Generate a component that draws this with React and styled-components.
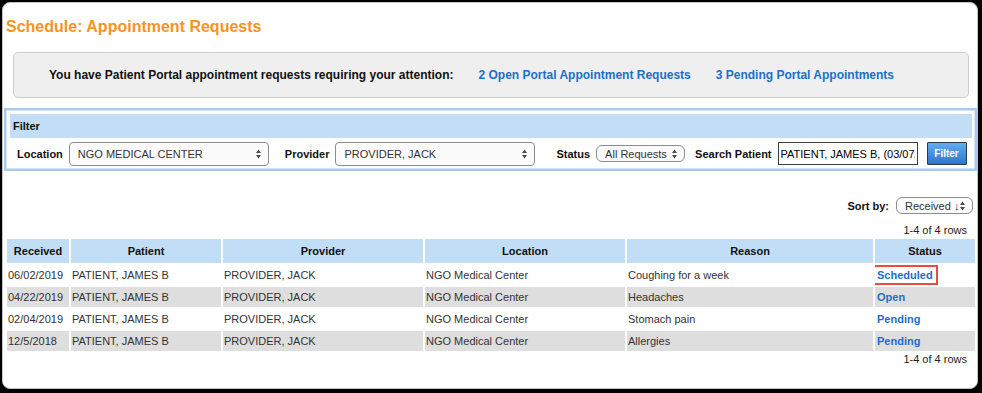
import React from 'react'
import styled, { createGlobalStyle } from 'styled-components'

const rows = [
  { received: '06/02/2019', patient: 'PATIENT, JAMES B', provider: 'PROVIDER, JACK', location: 'NGO Medical Center', reason: 'Coughing for a week', status: 'Scheduled', marked: true },
  { received: '04/22/2019', patient: 'PATIENT, JAMES B', provider: 'PROVIDER, JACK', location: 'NGO Medical Center', reason: 'Headaches', status: 'Open' },
  { received: '02/04/2019', patient: 'PATIENT, JAMES B', provider: 'PROVIDER, JACK', location: 'NGO Medical Center', reason: 'Stomach pain', status: 'Pending' },
  { received: '12/5/2018', patient: 'PATIENT, JAMES B', provider: 'PROVIDER, JACK', location: 'NGO Medical Center', reason: 'Allergies', status: 'Pending' }
]

const columns = [
  { label: 'Received', width: 62 },
  { label: 'Patient', width: 150 },
  { label: 'Provider', width: 200 },
  { label: 'Location', width: 200 },
  { label: 'Reason', width: 246 },
  { label: 'Status', width: 100 }
]

const Arrows = () =>
  <svg width="7" height="10" viewBox="0 0 7 10">
    <path d="M3.5 0.5 L6 4 H1 Z M3.5 9.5 L1 6 H6 Z" fill="#4a4a4a" />
  </svg>

const Dropdown = ({ width, small, value }) =>
  <SelectWrap>
    <Select width={width} small={small} defaultValue={value}>
      <option>{value}</option>
    </Select>
    <ArrowBox><Arrows /></ArrowBox>
  </SelectWrap>

export default () =>
  <>
    <GlobalStyle />
    <Page>
      <Title>Schedule: Appointment Requests</Title>
      <Notice>
        <span>You have Patient Portal appointment requests requiring your attention:</span>
        <Link href="#">2 Open Portal Appointment Requests</Link>
        <Link href="#">3 Pending Portal Appointments</Link>
      </Notice>

      <FilterBox>
        <FilterHeader>Filter</FilterHeader>
        <FilterRow>
          <Field>
            <Label>Location</Label>
            <Dropdown width={200} value="NGO MEDICAL CENTER" />
          </Field>
          <Field offset={16}>
            <Label>Provider</Label>
            <Dropdown width={200} value="PROVIDER, JACK" />
          </Field>
          <Field offset={21}>
            <Label>Status</Label>
            <Dropdown width={89} small value="All Requests" />
          </Field>
          <Field offset={10}>
            <Label>Search Patient</Label>
            <SearchInput defaultValue="PATIENT, JAMES B, (03/07/1975)" />
          </Field>
          <FilterButton>Filter</FilterButton>
        </FilterRow>
      </FilterBox>

      <SortRow>
        <Label>Sort by:</Label>
        <Dropdown width={77} small value="Received ↓" />
      </SortRow>
      <RowCount>1-4 of 4 rows</RowCount>

      <Table>
        <colgroup>
          {columns.map(c => <col key={c.label} style={{ width: c.width }} />)}
        </colgroup>
        <thead>
          <tr>
            {columns.map(c => <Th key={c.label}>{c.label}</Th>)}
          </tr>
        </thead>
        <tbody>
          {rows.map((r, i) =>
            <Tr key={i} striped={i % 2 === 1}>
              <Td>{r.received}</Td>
              <Td>{r.patient}</Td>
              <Td>{r.provider}</Td>
              <Td>{r.location}</Td>
              <Td>{r.reason}</Td>
              <Td>
                <StatusLink href="#" marked={r.marked}>{r.status}</StatusLink>
              </Td>
            </Tr>
          )}
        </tbody>
      </Table>
      <RowCount top={0}>1-4 of 4 rows</RowCount>
    </Page>
  </>

const GlobalStyle = createGlobalStyle`
  html, body {
    margin: 0;
    background: #000;
  }
  body {
    padding: 2px 4px 4px 2px;
    font-family: "Liberation Sans", Arial, Helvetica, sans-serif;
  }
`

const Page = styled.div`
  box-sizing: border-box;
  height: 387px;
  background: #fff;
  border: 1px solid #c4c4c4;
  border-radius: 8px;
  overflow: hidden;
`

const Title = styled.h1`
  margin: 15px 0 0 3px;
  font-size: 16px;
  line-height: 18px;
  font-weight: bold;
  color: #f7941d;
`

const Notice = styled.div`
  box-sizing: border-box;
  display: flex;
  align-items: center;
  gap: 25px;
  height: 46px;
  margin: 16px 8px 0 10px;
  padding-left: 35px;
  background: #efefef;
  border: 1px solid #cdcdcd;
  border-radius: 5px;
  font-size: 12px;
  font-weight: bold;
  color: #111;
`

const Link = styled.a`
  color: #1b6fca;
  text-decoration: none;
`

const FilterBox = styled.div`
  margin: 10px 0 0 1px;
  padding: 4px 3px 0 4px;
  border: 2px solid #a9c9ee;
  box-shadow: inset 0 0 0 1px #d4e5f8;
`

const FilterHeader = styled.div`
  height: 24px;
  line-height: 24px;
  padding-left: 3px;
  background: #c2ddf6;
  font-size: 11px;
  font-weight: bold;
  color: #111;
`

const FilterRow = styled.div`
  display: flex;
  align-items: center;
  height: 31px;
  padding-left: 7px;
`

const Field = styled.div`
  display: flex;
  align-items: center;
  gap: 6px;
  margin-left: ${props => props.offset || 0}px;
`

const Label = styled.span`
  font-size: 11px;
  font-weight: bold;
  color: #111;
`

const SelectWrap = styled.div`
  position: relative;
  display: inline-flex;
`

const Select = styled.select`
  appearance: none;
  box-sizing: border-box;
  width: ${props => props.width}px;
  height: ${props => props.small ? 17 : 24}px;
  margin: 0;
  padding: 0 ${props => props.small ? 12 : 16}px 0 8px;
  background: #fbfbfb;
  border: 1px solid #8c8c8c;
  border-radius: ${props => props.small ? 6 : 4}px;
  font-family: "Liberation Sans", "DejaVu Sans", Arial, sans-serif;
  font-size: 11px;
  color: #333;
`

const ArrowBox = styled.span`
  position: absolute;
  top: 50%;
  right: 7px;
  display: flex;
  transform: translateY(-50%);
  pointer-events: none;
`

const SearchInput = styled.input`
  box-sizing: border-box;
  width: 140px;
  height: 23px;
  margin: 0;
  padding: 0 2px;
  border: 1px solid #3c3c3c;
  border-radius: 0;
  font-family: "Liberation Sans", Arial, sans-serif;
  font-size: 11px;
  color: #000;
`

const FilterButton = styled.button`
  box-sizing: border-box;
  width: 40px;
  height: 23px;
  margin-left: 9px;
  padding: 0;
  border: 1px solid #2f3a48;
  border-radius: 1px;
  background: linear-gradient(#66acf0, #2c76d0);
  font-family: "Liberation Sans", Arial, sans-serif;
  font-size: 10px;
  font-weight: bold;
  color: #fff;
`

const SortRow = styled.div`
  display: flex;
  justify-content: flex-end;
  align-items: center;
  gap: 7px;
  height: 17px;
  margin: 26px 4px 0 0;
`

const RowCount = styled.div`
  margin: ${props => props.top ?? 10}px 10px 0 0;
  text-align: right;
  font-size: 11px;
  line-height: 13px;
  color: #222;
`

const Table = styled.table`
  table-layout: fixed;
  width: 972px;
  margin-left: 2px;
  border-spacing: 2px;
  font-size: 11px;
`

const Th = styled.th`
  height: 24px;
  padding: 0;
  background: #c2ddf6;
  font-weight: bold;
  color: #111;
  text-align: center;
`

const Tr = styled.tr`
  background: ${props => props.striped ? '#dedede' : '#fff'};
`

const Td = styled.td`
  height: 20px;
  padding: 0 1px;
  color: #333;
  white-space: nowrap;
  overflow: hidden;
`

const StatusLink = styled.a`
  color: #1b6fca;
  font-weight: bold;
  text-decoration: none;
  padding: 0 1px;
  outline: ${props => props.marked ? '2px solid #ea4b3f' : 'none'};
  outline-offset: 2px;
`
